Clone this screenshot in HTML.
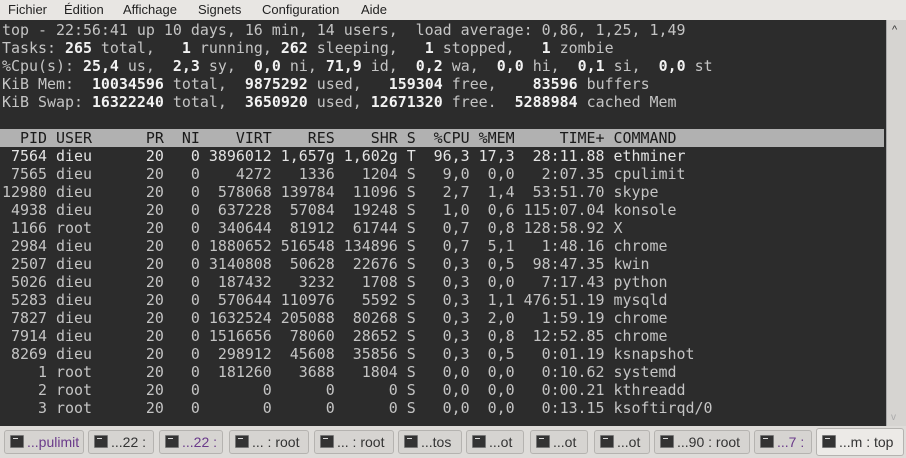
<!DOCTYPE html>
<html><head><meta charset="utf-8"><style>
*{margin:0;padding:0;box-sizing:border-box}
body{width:906px;height:458px;overflow:hidden;background:#e3e1de;font-family:"Liberation Sans","DejaVu Sans",sans-serif;position:relative}
.menu{position:absolute;left:0;top:0;width:906px;height:20px;background:#e8e6e3;font-size:13px;color:#222}
.menu span{position:absolute;top:2px}
.term{position:absolute;left:0;top:20px;width:886px;height:406px;background:#2c2c2c}
.scroll{position:absolute;left:886px;top:20px;width:20px;height:406px;background:#d6d4d1;border-left:1px solid #aaa}
pre{position:absolute;left:2px;top:21px;font-family:"DejaVu Sans Mono",monospace;font-size:14.95px;line-height:18px;color:#c4c4c4;white-space:pre}
b{color:#f2f2f2}
.hdr{position:absolute;left:0;top:129px;width:884px;height:18px;background:#b1b1b1}
.hl{color:#e4e4e4}
.tabs{position:absolute;left:0;top:426px;width:906px;height:32px;background:#dedcd9}
.tab{position:absolute;top:4px;height:24px;border:1px solid #b5b3b0;border-radius:3px;background:#d6d4d1;font-size:14px;color:#333;padding:3px 0 0 22px;white-space:nowrap;overflow:hidden}
.tab i{position:absolute;left:5px;top:4px;width:14px;height:13px;background:#333;border:1px solid #777;border-radius:1px}
.tab i:after{content:"";position:absolute;left:2px;top:2px;width:5px;height:2px;border-top:1px solid #ddd}
.tab.p{color:#6a3a8a}
.tab.a{top:2px;height:28px;background:#eceae7;padding-top:5px}
.tab.a i{top:6px}
</style></head><body>
<div class="menu"><span style="left:8px">Fichier</span><span style="left:64px">Édition</span><span style="left:123px">Affichage</span><span style="left:198px">Signets</span><span style="left:262px">Configuration</span><span style="left:361px">Aide</span></div>
<div class="term"></div>
<div class="hdr"></div>
<div class="scroll"><div style="position:absolute;left:5px;top:4px;font-size:11px;color:#333">^</div><div style="position:absolute;left:4px;top:392px;font-size:10px;color:#aaa">v</div></div>
<pre>top - 22:56:41 up 10 days, 16 min, 14 users,  load average: 0,86, 1,25, 1,49
Tasks: <b>265</b> total,   <b>1</b> running, <b>262</b> sleeping,   <b>1</b> stopped,   <b>1</b> zombie
%Cpu(s): <b>25,4</b> us,  <b>2,3</b> sy,  <b>0,0</b> ni, <b>71,9</b> id,  <b>0,2</b> wa,  <b>0,0</b> hi,  <b>0,1</b> si,  <b>0,0</b> st
KiB Mem:  <b>10034596</b> total,  <b>9875292</b> used,   <b>159304</b> free,    <b>83596</b> buffers
KiB Swap: <b>16322240</b> total,  <b>3650920</b> used, <b>12671320</b> free.  <b>5288984</b> cached Mem

<span style="color:#1a1a1a">  PID USER      PR  NI    VIRT    RES    SHR S  %CPU %MEM     TIME+ COMMAND</span>
<span class="hl"> 7564 dieu      20   0 3896012 1,657g 1,602g T  96,3 17,3  28:11.88 ethminer</span>
 7565 dieu      20   0    4272   1336   1204 S   9,0  0,0   2:07.35 cpulimit
12980 dieu      20   0  578068 139784  11096 S   2,7  1,4  53:51.70 skype
 4938 dieu      20   0  637228  57084  19248 S   1,0  0,6 115:07.04 konsole
 1166 root      20   0  340644  81912  61744 S   0,7  0,8 128:58.92 X
 2984 dieu      20   0 1880652 516548 134896 S   0,7  5,1   1:48.16 chrome
 2507 dieu      20   0 3140808  50628  22676 S   0,3  0,5  98:47.35 kwin
 5026 dieu      20   0  187432   3232   1708 S   0,3  0,0   7:17.43 python
 5283 dieu      20   0  570644 110976   5592 S   0,3  1,1 476:51.19 mysqld
 7827 dieu      20   0 1632524 205088  80268 S   0,3  2,0   1:59.19 chrome
 7914 dieu      20   0 1516656  78060  28652 S   0,3  0,8  12:52.85 chrome
 8269 dieu      20   0  298912  45608  35856 S   0,3  0,5   0:01.19 ksnapshot
    1 root      20   0  181260   3688   1804 S   0,0  0,0   0:10.62 systemd
    2 root      20   0       0      0      0 S   0,0  0,0   0:00.21 kthreadd
    3 root      20   0       0      0      0 S   0,0  0,0   0:13.15 ksoftirqd/0</pre>
<div class="tabs">
<div class="tab p" style="left:4px;width:80px"><i></i>...pulimit</div>
<div class="tab" style="left:88px;width:66px"><i></i>...22 :</div>
<div class="tab p" style="left:159px;width:64px"><i></i>...22 :</div>
<div class="tab" style="left:229px;width:80px"><i></i>... : root</div>
<div class="tab" style="left:314px;width:80px"><i></i>... : root</div>
<div class="tab" style="left:398px;width:64px"><i></i>...tos</div>
<div class="tab" style="left:466px;width:58px"><i></i>...ot</div>
<div class="tab" style="left:530px;width:58px"><i></i>...ot</div>
<div class="tab" style="left:594px;width:56px"><i></i>...ot</div>
<div class="tab" style="left:654px;width:96px"><i></i>...90 : root</div>
<div class="tab p" style="left:754px;width:58px"><i></i>...7 :</div>
<div class="tab a" style="left:816px;width:88px"><i></i>...m : top</div>
</div>
</body></html>
